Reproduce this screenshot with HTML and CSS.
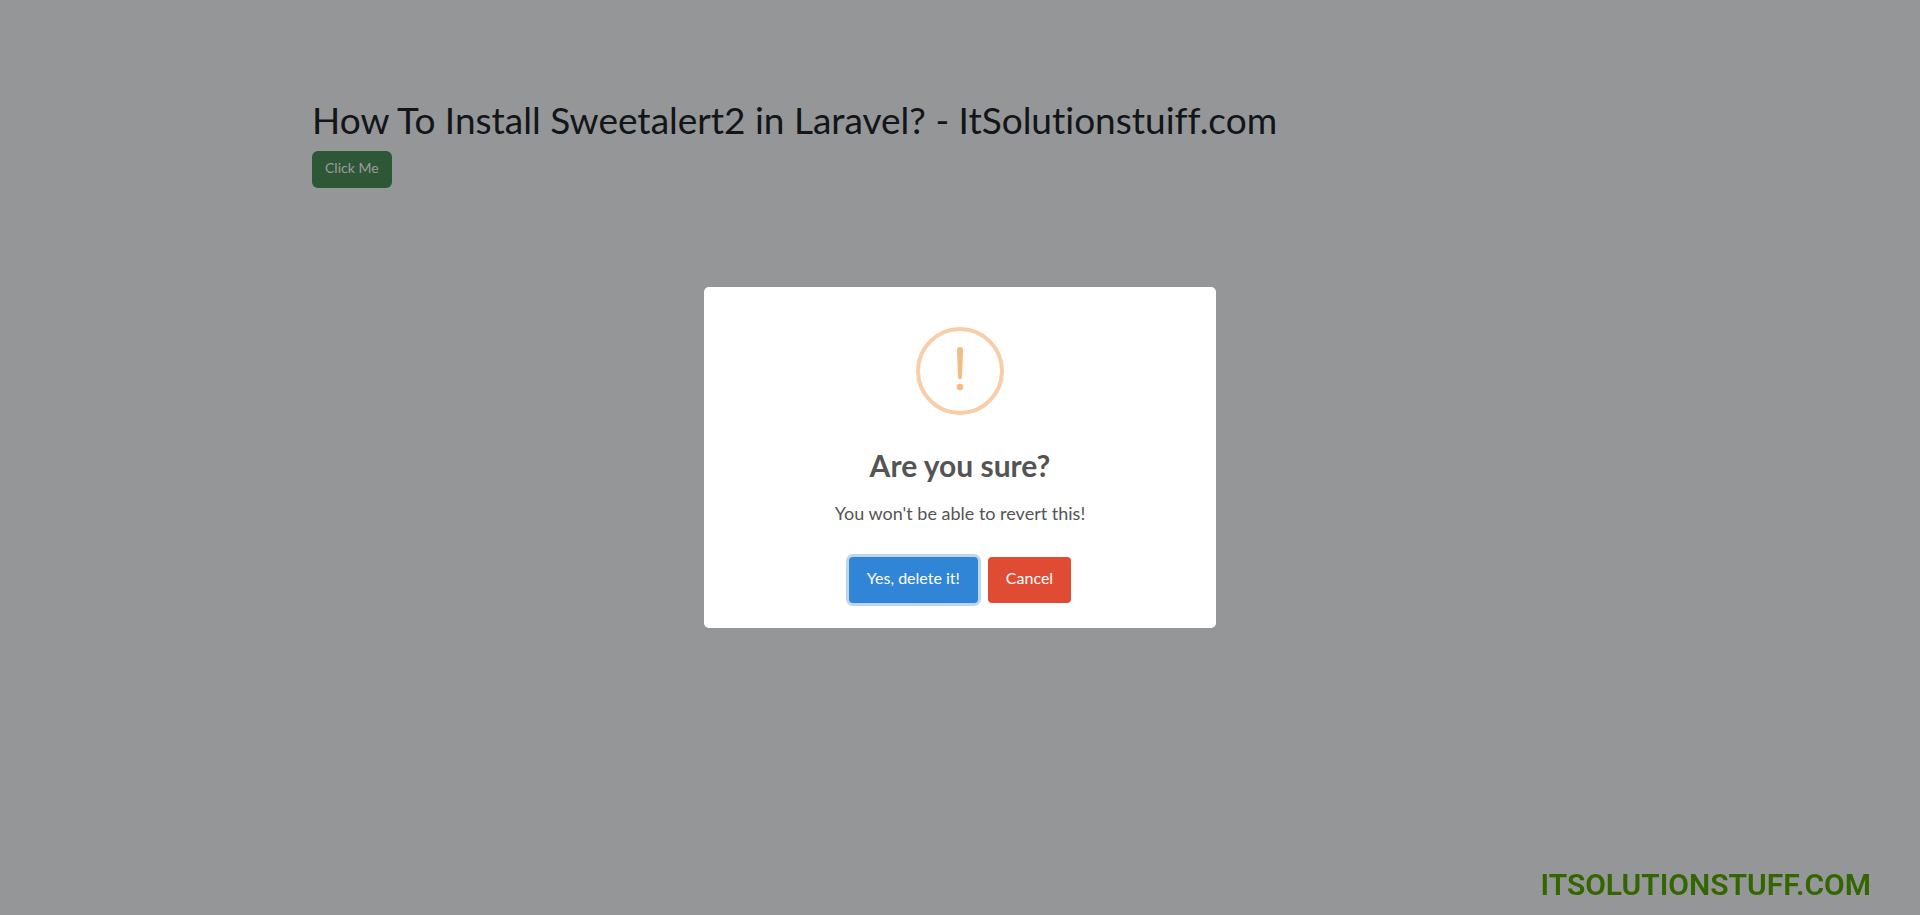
FILE: index.html
```
<!DOCTYPE html>
<html lang="en">
<head>
<meta charset="utf-8">
<meta name="viewport" content="width=device-width, initial-scale=1">
<title>How To Install Sweetalert2 in Laravel?</title>
<link rel="stylesheet" href="styles.css">
</head>
<body>
<div class="page">
  <main class="container">
    <h1 class="heading">How To Install Sweetalert2 in Laravel? - ItSolutionstuiff.com</h1>
    <button class="btn-success" type="button">Click Me</button>
  </main>
</div>
<div class="backdrop">
  <section class="popup" role="dialog" aria-modal="true" aria-labelledby="popup-title" aria-describedby="popup-text">
    <svg class="popup-icon" viewBox="0 0 88 88" aria-hidden="true">
      <circle cx="44" cy="44" r="42" fill="none" stroke="#f8cda8" stroke-width="4"/>
      <path d="M41 23Q41 20 44 20Q47 20 47 23L46 50Q45.800 52.300 44 52.300Q42.200 52.300 42 50Z" fill="#f5bb85"/>
      <circle cx="44" cy="60" r="3.300" fill="#f5bb85"/>
    </svg>
    <h2 class="popup-title" id="popup-title">Are you sure?</h2>
    <p class="popup-text" id="popup-text">You won't be able to revert this!</p>
    <div class="popup-actions">
      <button class="popup-button confirm" type="button">Yes, delete it!</button>
      <button class="popup-button cancel" type="button">Cancel</button>
    </div>
  </section>
</div>
<footer class="watermark">ITSOLUTIONSTUFF.COM</footer>
</body>
</html>
```
FILE: styles.css
```
*, *::before, *::after { box-sizing: border-box; }

body {
  margin: 0;
  min-height: 100vh;
  background: #f8fafc;
  color: #212529;
  font-family: Lato, "Noto Sans", sans-serif;
  font-variant-ligatures: none;
}

.container {
  max-width: 1320px;
  margin: 0 auto;
  padding: 96px 12px 0;
}

.heading {
  margin: 0 0 8px;
  font-size: 37px;
  font-weight: 400;
  line-height: 47px;
}

.btn-success {
  display: block;
  padding: 6px 13px 10px;
  border: 0;
  border-radius: 6px;
  background: #4b915a;
  color: #fff;
  font: inherit;
  font-size: 14px;
  line-height: 21px;
}

.backdrop {
  position: fixed;
  inset: 0;
  display: grid;
  place-items: center;
  padding: 10px;
  background: rgba(0, 0, 0, 0.4);
}

.popup {
  display: flex;
  flex-direction: column;
  align-items: center;
  width: 100%;
  max-width: 512px;
  padding: 40px 0 25px;
  border-radius: 5px;
  background: #fff;
  color: #545454;
  text-align: center;
}

.popup-icon {
  width: 88px;
  height: 88px;
  margin-bottom: 30px;
}

.popup-title {
  margin: 0;
  font-size: 30px;
  font-weight: 700;
  line-height: 40px;
}

.popup-text {
  margin: 14px 0 30px;
  font-size: 18px;
  line-height: 28px;
}

.popup-actions {
  display: flex;
  gap: 10px;
}

.popup-button {
  padding: 9px 18px 13px;
  border: 0;
  border-radius: 4px;
  color: #fff;
  font: inherit;
  font-size: 16px;
  line-height: 24px;
}

.confirm {
  background: #3085d6;
  box-shadow: 0 0 0 3px #bfd5eb;
}

.cancel { background: #e04b34; }

.watermark {
  position: fixed;
  right: 49px;
  bottom: 12px;
  color: #336600;
  font-family: Roboto, sans-serif;
  font-size: 30px;
  font-weight: 600;
  line-height: 36px;
}
```
